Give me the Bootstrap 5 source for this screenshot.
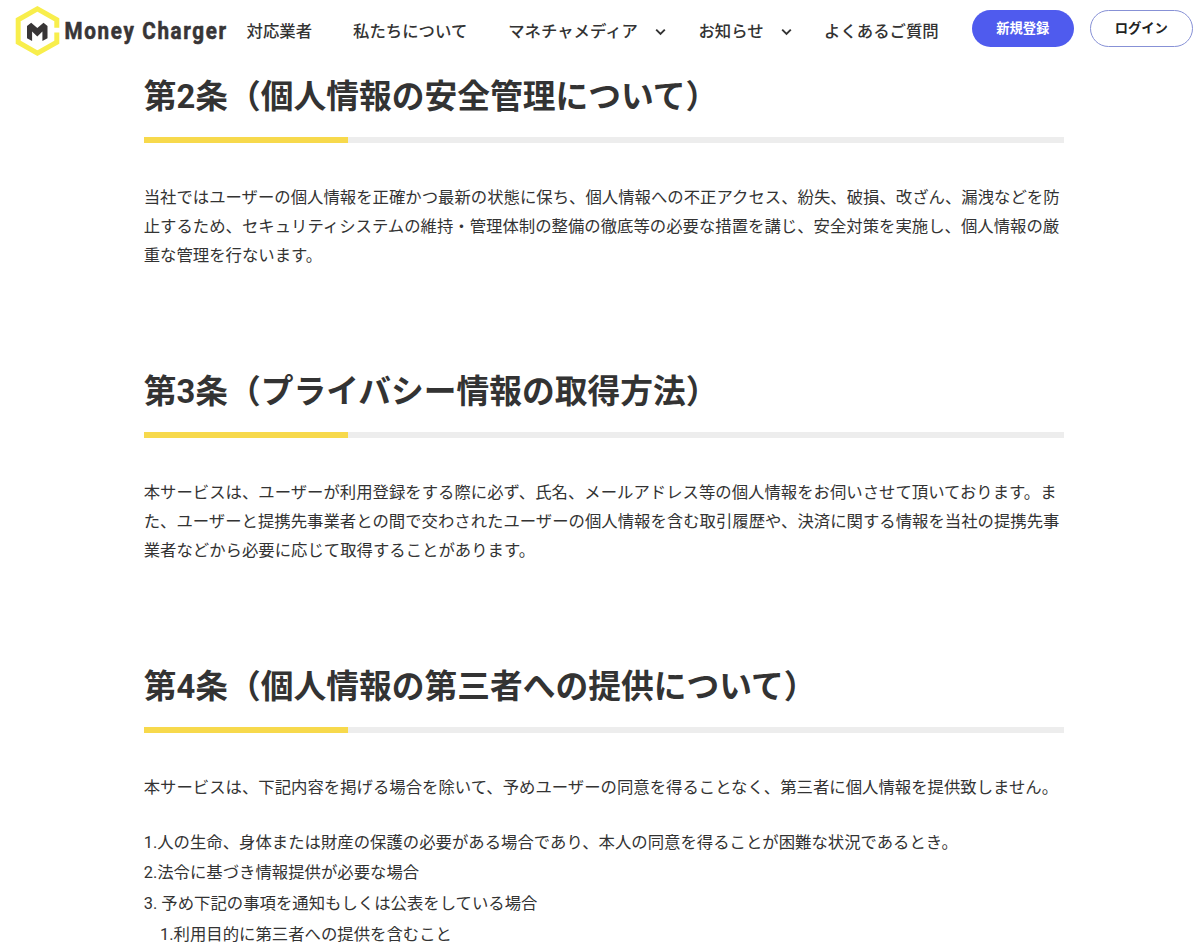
<!DOCTYPE html>
<html lang="ja">
<head>
    <meta charset="UTF-8">
    <meta name="viewport" content="width=device-width, initial-scale=1.0">
    <title>プライバシーポリシー | Money Charger</title>
    <link href="https://cdn.jsdelivr.net/npm/bootstrap@5.3.0/dist/css/bootstrap.min.css" rel="stylesheet">
    <style>
        body {
            font-family: Roboto, "Noto Sans CJK JP", sans-serif;
            font-size: 16.39px;
            line-height: 28.65px;
            color: #333;
            height: 950px;
            overflow: hidden;
        }
        .site-header {
            height: 62px;
            padding: 0 7.5px 0 15px;
        }
        .brand-logo {
            width: 214px;
            height: 62px;
            margin-right: 17.6px;
        }
        .brand-logo text {
            font-family: Roboto, sans-serif;
            font-weight: 700;
            font-size: 24px;
        }
        .main-menu {
            gap: 40.9px;
            padding-top: 1px;
            font-size: 16.4px;
            font-weight: 500;
            line-height: 24px;
        }
        .main-menu .nav-link {
            color: #333;
        }
        .chevron {
            width: 11px;
            height: 8px;
            margin: 0 -8.4px 0 16.9px;
        }
        .header-btns {
            gap: 16px;
            margin-bottom: 5px;
        }
        .btn-pill {
            width: 102.5px;
            height: 37px;
            padding: 0;
            font-size: 13.3px;
            font-weight: 700;
            line-height: 36px;
        }
        .btn-signup {
            color: #fff;
            background-color: #4f5bee;
        }
        .btn-login {
            color: #222;
            border-color: #8791d6;
        }
        .policy {
            width: 920.8px;
            margin-left: 143.7px;
            padding-top: 9.4px;
        }
        .policy-section {
            height: 294.8px;
        }
        .policy-section h2 {
            height: 72px;
            padding-top: 4.6px;
            margin-bottom: 41px;
            font-size: 32.75px;
            font-weight: 700;
            line-height: 42px;
            border-bottom: 6.2px solid;
            border-image: linear-gradient(to right, #f7d94c 204.9px, #ededed 204.9px) 1;
        }
        .policy-section p {
            margin-bottom: 25px;
        }
        .policy-list {
            line-height: 30.7px;
        }
        .policy-list .policy-list {
            padding-left: 16.4px;
        }
    </style>
</head>
<body class="bg-white">
    <header class="site-header d-flex align-items-center bg-white">
        <a href="#" class="flex-shrink-0">
            <svg class="brand-logo d-block" viewBox="15 0 214 62" role="img" aria-label="Money Charger">
                <path d="M56.8 27.8V19.8L37.4 8.9L18.2 19.8V42.3L37.4 53.1L56.8 42.3V32.6" fill="none" stroke="#f8ee4c" stroke-width="5"/>
                <path d="M27 26L31.2 22.8L37.3 28L43.5 22.8L47.5 26V38.3L42.4 41V31.6L37.3 36.4L32.1 31.6V41L27 38.3Z" fill="#383536"/>
                <text transform="translate(64.5 38.7) scale(.86 1)" textLength="188" fill="#383536" stroke="#383536" stroke-width=".6" stroke-linejoin="round">Money Charger</text>
            </svg>
        </a>
        <nav class="main-menu d-flex flex-shrink-0">
            <a href="#" class="nav-link">対応業者</a>
            <a href="#" class="nav-link">私たちについて</a>
            <a href="#" class="nav-link d-flex align-items-center">マネチャメディア
                <svg class="chevron" viewBox="0 0 11 8"><path d="M1.2 1.7L5.5 6L9.8 1.7" fill="none" stroke="#333" stroke-width="1.9"/></svg>
            </a>
            <a href="#" class="nav-link d-flex align-items-center">お知らせ
                <svg class="chevron" viewBox="0 0 11 8"><path d="M1.2 1.7L5.5 6L9.8 1.7" fill="none" stroke="#333" stroke-width="1.9"/></svg>
            </a>
            <a href="#" class="nav-link">よくあるご質問</a>
        </nav>
        <div class="header-btns d-flex ms-auto flex-shrink-0">
            <a href="#" class="btn btn-pill btn-signup rounded-pill">新規登録</a>
            <a href="#" class="btn btn-pill btn-login rounded-pill">ログイン</a>
        </div>
    </header>

    <main class="policy">
        <section class="policy-section">
            <h2>第2条（個人情報の安全管理について）</h2>
            <p>当社ではユーザーの個人情報を正確かつ最新の状態に保ち、個人情報への不正アクセス、紛失、破損、改ざん、漏洩などを防止するため、セキュリティシステムの維持・管理体制の整備の徹底等の必要な措置を講じ、安全対策を実施し、個人情報の厳重な管理を行ないます。</p>
        </section>
        <section class="policy-section">
            <h2>第3条（プライバシー情報の取得方法）</h2>
            <p>本サービスは、ユーザーが利用登録をする際に必ず、氏名、メールアドレス等の個人情報をお伺いさせて頂いております。また、ユーザーと提携先事業者との間で交わされたユーザーの個人情報を含む取引履歴や、決済に関する情報を当社の提携先事業者などから必要に応じて取得することがあります。</p>
        </section>
        <section class="policy-section">
            <h2>第4条（個人情報の第三者への提供について）</h2>
            <p>本サービスは、下記内容を掲げる場合を除いて、予めユーザーの同意を得ることなく、第三者に個人情報を提供致しません。</p>
            <ul class="policy-list list-unstyled mb-0">
                <li>1.人の生命、身体または財産の保護の必要がある場合であり、本人の同意を得ることが困難な状況であるとき。</li>
                <li>2.法令に基づき情報提供が必要な場合</li>
                <li>3. 予め下記の事項を通知もしくは公表をしている場合
                    <ul class="policy-list list-unstyled">
                        <li>1.利用目的に第三者への提供を含むこと</li>
                    </ul>
                </li>
            </ul>
        </section>
    </main>

    <script src="https://cdn.jsdelivr.net/npm/bootstrap@5.3.0/dist/js/bootstrap.bundle.min.js"></script>
</body>
</html>
